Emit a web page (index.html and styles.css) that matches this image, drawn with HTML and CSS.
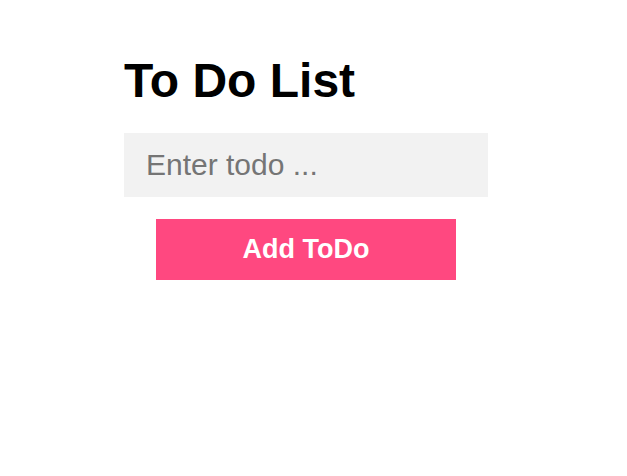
FILE: index.html
```html
<!DOCTYPE html>
<html>
<head>
<meta charset="utf-8">
<link rel="stylesheet" href="styles.css">
</head>
<body>
<div class="todo">
  <h1 class="title">To Do List</h1>
  <input class="todo-input" type="text" placeholder="Enter todo ...">
  <button class="add-btn">Add ToDo</button>
</div>
</body>
</html>
```
FILE: styles.css
```css
body {
  margin: 0;
  font-family: "Liberation Sans", Arial, sans-serif;
  background: #fff;
}
.todo {
  width: 364px;
  margin-left: 124px;
  padding-top: 53px;
  display: flex;
  flex-direction: column;
  align-items: center;
}
.title {
  align-self: stretch;
  margin: 0 0 25px;
  font-size: 48px;
  font-weight: bold;
  color: #000;
  line-height: 55px;
}
.todo-input {
  box-sizing: border-box;
  width: 364px;
  height: 64px;
  border: none;
  outline: none;
  background: #f2f2f2;
  padding: 0 22px;
  font-family: "Liberation Sans", Arial, sans-serif;
  font-size: 30px;
  color: #333;
}
.todo-input::placeholder {
  color: #757575;
}
.add-btn {
  margin-top: 22px;
  width: 300px;
  height: 61px;
  border: none;
  background: #ff4880;
  color: #fff;
  font-family: "Liberation Sans", Arial, sans-serif;
  font-size: 27px;
  font-weight: bold;
  cursor: pointer;
}
```
